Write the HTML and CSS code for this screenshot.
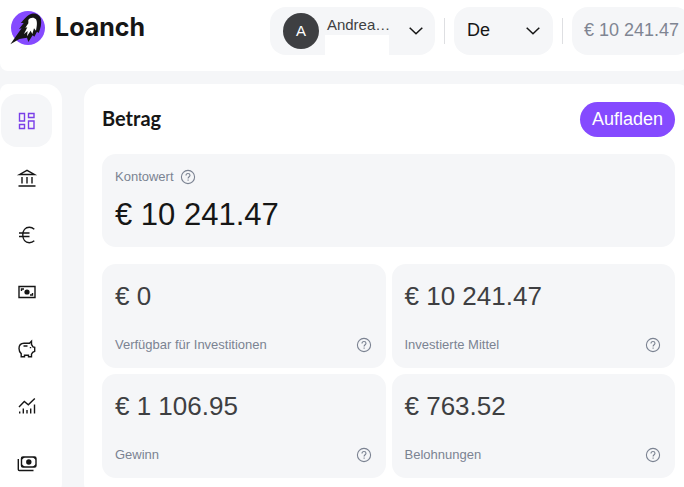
FILE: index.html
```html
<!DOCTYPE html>
<html lang="de">
<head>
    <meta charset="UTF-8">
    <meta name="viewport" content="width=device-width, initial-scale=1.0">
    <title>Loanch</title>
    <link rel="stylesheet" href="styles.css">
</head>
<body>
    <!-- Shared icons -->
    <svg class="sprite" aria-hidden="true">
        <symbol id="help" viewBox="0 0 16 16">
            <circle cx="8" cy="8" r="6.6"/>
            <path d="M6 6.5C6 5.2 6.8 4.5 8 4.5s2 .8 2 1.8c0 1.4-1.9 1.5-1.9 3.1M8.1 10.6v1.1"/>
        </symbol>
        <symbol id="chevron" viewBox="0 0 14 8">
            <path d="M.7.7 7 6.8 13.3.7"/>
        </symbol>
    </svg>

    <header class="header">
        <a class="logo" href="#">
            <svg class="logo-icon" viewBox="30 28 108 105" aria-hidden="true">
                <circle cx="84" cy="82" r="51" fill="#854aff"/>
                <path d="M31 131 52 101 65 83 57 85 71 67 62 67C72 58 78 44 95 39C110 36 121 44 123 56C125 70 122 84 116 97L111 93 103 108 98 104 85 124 81 111 58 115Z" fill="#161616"/>
                <path d="M85 58C90 50 102 48 108 56C113 65 110 79 108 90L102 83 97 100 92 90 81 107 83 91 72 100 82 80 76 81 85 68Z" fill="#fff"/>
            </svg>
            <span>Loanch</span>
        </a>
        <div class="header-actions">
            <button class="user" type="button">
                <span class="avatar">A</span>
                <span class="user-info">
                    <span class="user-name">Andrea…</span>
                    <span class="user-detail"></span>
                </span>
                <svg class="chevron" aria-hidden="true"><use href="#chevron"/></svg>
            </button>
            <span class="divider"></span>
            <div class="language">
                <select aria-label="Sprache">
                    <option>De</option>
                    <option>En</option>
                </select>
                <svg class="chevron" aria-hidden="true"><use href="#chevron"/></svg>
            </div>
            <span class="divider"></span>
            <div class="balance">€ 10 241.47</div>
        </div>
    </header>

    <div class="page">
        <nav class="sidebar">
            <a class="nav-item active" href="#" aria-label="Übersicht">
                <svg viewBox="0 0 18 18"><path d="M1.500 1.500h5v7.500h-5zM10.500 1.500h5.500v4h-5.500zM10.500 9h5.500v7.500h-5.500zM1.500 12.500h5v4h-5z"/></svg>
            </a>
            <a class="nav-item" href="#" aria-label="Investieren">
                <svg viewBox="0 0 18 18"><path d="M1.500 5.500 9 1.300l7.500 4.200zM4 8v6.500M9 8v6.500M14 8v6.500M.5 17h17"/></svg>
            </a>
            <a class="nav-item" href="#" aria-label="Investitionen">
                <svg viewBox="0 0 18 18"><path d="M16.300 3.200C14.800 1.900 13 1.300 11.300 1.300 7.300 1.300 4.800 4.500 4.800 9s2.500 7.700 6.500 7.700c1.700 0 3.500-.6 5-1.900M1 7h10.500M1 10.500h10.500"/></svg>
            </a>
            <a class="nav-item" href="#" aria-label="Zahlungen">
                <svg viewBox="0 0 18 18"><path d="M1 3.500h16v11H1zM3.500 8V6H6M14.500 10v2H12"/><circle class="fill" cx="9" cy="9" r="2.600"/></svg>
            </a>
            <a class="nav-item" href="#" aria-label="Sparen">
                <svg viewBox="0 0 18 18"><path d="M6 3.200h5.500L13.500 1.200v3.300l1.500 2.300 1.700.5v4l-2 1-1.200 1.800v2.700h-3v-1.500H6.500v1.500H3.200v-3.200C1.800 12.400 1 10.700 1 8.500 1 5.200 3 3.200 6 3.200zM5.500 6h4M12.500 7v1.200"/></svg>
            </a>
            <a class="nav-item" href="#" aria-label="Statistik">
                <svg viewBox="0 0 18 18"><path d="M1 10 6.300 4.500l4 3.300L16.800 1.500M1.700 14.500v2M5.300 11.500v5M9 13v3.500M12.700 11.500v5M16.500 7.500v9"/></svg>
            </a>
            <a class="nav-item" href="#" aria-label="Auszahlungen">
                <svg viewBox="0 0 18 18"><path d="M.3 5v10.500q0 1 1 1h14.200"/><rect x="3.500" y="3" width="14.500" height="10" rx="1.500"/><path class="fill" d="M3.500 3h3.500L3.500 6zM18 3v3l-3.500-3zM3.500 13v-3l3.500 3zM18 13h-3.500l3.500-3z"/><circle class="fill" cx="10.800" cy="8" r="2.700"/></svg>
            </a>
        </nav>

        <main class="main">
            <div class="main-head">
                <h1>Betrag</h1>
                <button class="btn" type="button">Aufladen</button>
            </div>

            <section class="card total">
                <div class="total-label">
                    <span>Kontowert</span>
                    <svg class="help" aria-hidden="true"><use href="#help"/></svg>
                </div>
                <div class="total-value">€ 10 241.47</div>
            </section>

            <div class="cards">
                <section class="card">
                    <div class="card-value">€ 0</div>
                    <div class="card-label">
                        <span>Verfügbar für Investitionen</span>
                        <svg class="help" aria-hidden="true"><use href="#help"/></svg>
                    </div>
                </section>
                <section class="card">
                    <div class="card-value">€ 10 241.47</div>
                    <div class="card-label">
                        <span>Investierte Mittel</span>
                        <svg class="help" aria-hidden="true"><use href="#help"/></svg>
                    </div>
                </section>
                <section class="card">
                    <div class="card-value">€ 1 106.95</div>
                    <div class="card-label">
                        <span>Gewinn</span>
                        <svg class="help" aria-hidden="true"><use href="#help"/></svg>
                    </div>
                </section>
                <section class="card">
                    <div class="card-value">€ 763.52</div>
                    <div class="card-label">
                        <span>Belohnungen</span>
                        <svg class="help" aria-hidden="true"><use href="#help"/></svg>
                    </div>
                </section>
            </div>
        </main>
    </div>
</body>
</html>
```
FILE: styles.css
```css
* {
    margin: 0;
    padding: 0;
    box-sizing: border-box;
}

html {
    overflow-x: hidden;
    scrollbar-width: none;
}

body {
    min-width: 693px;
    min-height: 100vh;
    font-family: "Liberation Sans", Arial, sans-serif;
    background: #f5f6f8;
    color: #161616;
}

.sprite {
    display: none;
}

button,
select {
    font: inherit;
    color: inherit;
    border: none;
    cursor: pointer;
}

/* Header */
.header {
    display: flex;
    justify-content: space-between;
    align-items: flex-start;
    padding: 7px 2px 16px 10px;
    background: #fff;
    border-radius: 0 0 16px 8px;
}

.logo {
    display: flex;
    align-items: center;
    gap: 9px;
    height: 40px;
    font-family: Inter, sans-serif;
    font-size: 25px;
    font-weight: 700;
    color: #161616;
    text-decoration: none;
}

.logo-icon {
    width: 36px;
    height: 35px;
}

.header-actions {
    display: flex;
    align-items: center;
    gap: 9px;
}

.user {
    display: flex;
    align-items: center;
    height: 48px;
    padding: 0 12px 0 13px;
    background: #f5f6f8;
    border-radius: 16px;
    overflow: hidden;
}

.avatar {
    width: 36px;
    height: 36px;
    margin-right: 6px;
    border-radius: 50%;
    background: #3e3f42;
    color: #fff;
    font-size: 15px;
    line-height: 36px;
}

.user-info {
    display: flex;
    flex-direction: column;
    align-self: stretch;
    width: 64px;
    margin-right: 20px;
}

.user-name {
    padding: 8px 0 0 2px;
    font-size: 15px;
    line-height: 20px;
    color: #3e3f42;
    text-align: left;
    white-space: nowrap;
}

.user-detail {
    flex: 1;
    background: #fff;
}

.chevron {
    width: 14px;
    height: 8px;
    fill: none;
    stroke: #161616;
    stroke-width: 1.5;
}

.divider {
    width: 1px;
    height: 26px;
    background: #dedfe2;
}

/* the arrow shares the grid cell with the select */
.language {
    display: grid;
    align-items: center;
    width: 99px;
    height: 48px;
    font-size: 18px;
}

.language select {
    grid-area: 1 / 1;
    height: 48px;
    padding: 0 13px 2px;
    appearance: none;
    background: #f5f6f8;
    border-radius: 16px;
}

.language .chevron {
    grid-area: 1 / 1;
    justify-self: end;
    margin-right: 13px;
    pointer-events: none;
}

.balance {
    height: 48px;
    padding: 0 12px;
    background: #f5f6f8;
    border-radius: 16px;
    font-size: 18px;
    line-height: 46px;
    color: #7f8592;
    white-space: nowrap;
}

/* Layout */
.page {
    display: flex;
    gap: 22px;
    padding-top: 13px;
}

.sidebar {
    display: flex;
    flex-direction: column;
    gap: 4px;
    padding: 10px 10px 10px 1px;
    background: #fff;
    border-radius: 8px 16px 16px 8px;
}

.nav-item {
    display: flex;
    align-items: center;
    justify-content: center;
    width: 51px;
    height: 53px;
    border-radius: 16px;
    color: #161616;
}

.nav-item.active {
    background: #f5f6f8;
    color: #7a3fe8;
}

.nav-item svg {
    width: 18px;
    height: 18px;
    fill: none;
    stroke: currentColor;
    stroke-width: 1.4;
    overflow: visible;
}

.nav-item .fill {
    fill: currentColor;
    stroke: none;
}

.main {
    flex: 1;
    padding: 18px;
    background: #fff;
    border-radius: 16px;
}

.main-head {
    display: flex;
    justify-content: space-between;
    margin-bottom: 17px;
}

.main-head h1 {
    font-family: Lato, sans-serif;
    font-size: 20px;
    font-weight: 700;
    line-height: 32px;
}

.btn {
    height: 35px;
    padding: 0 12px;
    border-radius: 18px;
    background: #854aff;
    color: #fff;
    font-size: 18px;
}

/* Cards */
.card {
    padding: 13px;
    background: #f5f6f8;
    border-radius: 14px;
}

.total {
    margin-bottom: 17px;
}

.total-label {
    display: flex;
    align-items: center;
    gap: 6px;
    font-size: 13px;
    line-height: 20px;
    color: #7b8392;
}

.total-value {
    padding: 10px 0 1px;
    font-size: 31px;
    line-height: 36px;
}

.help {
    width: 16px;
    height: 16px;
    fill: none;
    stroke: #7b8392;
    stroke-width: 1.1;
}

.cards {
    display: grid;
    grid-template-columns: 1fr 1fr;
    gap: 6px;
}

.card-value {
    font-size: 26px;
    line-height: 38px;
    color: #3e3f42;
}

.card-label {
    display: flex;
    align-items: center;
    justify-content: space-between;
    padding: 20px 1px 0 0;
    font-size: 13px;
    line-height: 20px;
    color: #7b8392;
}
```
